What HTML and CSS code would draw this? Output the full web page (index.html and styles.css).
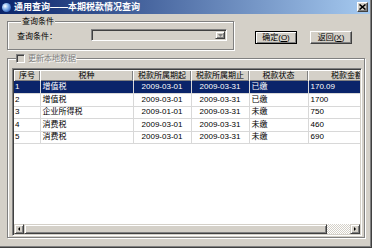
FILE: index.html
```html
<!DOCTYPE html>
<html lang="zh-CN">
  <head>
    <meta charset="UTF-8" />
    <title>通用查询——本期税款情况查询</title>
    <link rel="stylesheet" href="styles.css">
  </head>
  <body>
    <div class="window">
      <div class="frame">
        <div class="titlebar">
          <span class="app-icon"></span>
          <span class="title">通用查询——本期税款情况查询</span>
          <span class="close-btn">
            <svg width="7" height="6" viewBox="0 0 7 6"><path d="M0.5 0.5L6.5 5.5M6.5 0.5L0.5 5.5" stroke="#000" stroke-width="1.6"/></svg>
          </span>
        </div>

        <div class="content">
          <div class="top-row">
            <fieldset class="group query-group">
              <legend>查询条件</legend>
              <div class="field">
                <label>查询条件：</label>
                <div class="combo">
                  <span class="combo-btn">
                    <svg width="5" height="3" viewBox="0 0 5 3"><path d="M0 0h5L2.5 3z" fill="#808080"/></svg>
                  </span>
                </div>
              </div>
            </fieldset>
            <div class="actions">
              <button class="btn default">确定(<u>O</u>)</button>
              <button class="btn">返回(<u>X</u>)</button>
            </div>
          </div>

          <fieldset class="group data-group">
            <legend><span class="checkbox"></span><span class="muted">更新本地数据</span></legend>
            <div class="listview">
              <div class="list-body">
                <table class="grid">
                  <colgroup>
                    <col style="width:26px">
                    <col style="width:93px">
                    <col style="width:58px">
                    <col style="width:58px">
                    <col style="width:59px">
                    <col style="width:78px">
                  </colgroup>
                  <thead>
                    <tr>
                      <th>序号</th>
                      <th>税种</th>
                      <th>税款所属期起</th>
                      <th>税款所属期止</th>
                      <th>税款状态</th>
                      <th>税款金额</th>
                    </tr>
                  </thead>
                  <tbody>
                    <tr class="selected">
                      <td>1</td><td>增值税</td><td class="c">2009-03-01</td><td class="c">2009-03-31</td><td>已缴</td><td>170.09</td>
                    </tr>
                    <tr>
                      <td>2</td><td>增值税</td><td class="c">2009-03-01</td><td class="c">2009-03-31</td><td>已缴</td><td>1700</td>
                    </tr>
                    <tr>
                      <td>3</td><td>企业所得税</td><td class="c">2009-01-01</td><td class="c">2009-03-31</td><td>未缴</td><td>750</td>
                    </tr>
                    <tr>
                      <td>4</td><td>消费税</td><td class="c">2009-03-01</td><td class="c">2009-03-31</td><td>未缴</td><td>460</td>
                    </tr>
                    <tr>
                      <td>5</td><td>消费税</td><td class="c">2009-03-01</td><td class="c">2009-03-31</td><td>未缴</td><td>690</td>
                    </tr>
                  </tbody>
                </table>
              </div>
              <div class="hscroll">
                <span class="sb-btn">
                  <svg width="2" height="4" viewBox="0 0 2 4"><path d="M2 0v4L0 2z" fill="#000"/></svg>
                </span>
                <span class="sb-thumb"></span>
                <span class="sb-track"></span>
                <span class="sb-btn">
                  <svg width="2" height="4" viewBox="0 0 2 4"><path d="M0 0v4l2-2z" fill="#000"/></svg>
                </span>
              </div>
            </div>
          </fieldset>
        </div>
      </div>
    </div>
  </body>
</html>
```

FILE: styles.css
```css
* {
  box-sizing: border-box;
}
body {
  margin: 0;
  font-family: "Liberation Sans", "Noto Sans CJK SC", sans-serif;
  font-size: 8px;
  color: #000;
}
.window {
  width: 372px;
  height: 248px;
  background-color: #d4d0c8;
  border-right: 1px solid #404040;
  border-bottom: 1px solid #404040;
}
.frame {
  height: 100%;
  border-right: 1px solid #808080;
  border-bottom: 1px solid #808080;
}

/* title bar */
.titlebar {
  height: 14px;
  display: flex;
  align-items: center;
  padding: 0 2px;
  background: linear-gradient(to right, #0a246a, #a6caf0);
  color: #fff;
}
.app-icon {
  width: 9px;
  height: 9px;
  border-radius: 50%;
  background: radial-gradient(circle at 35% 35%, #fff, #8fbbee 35%, #2a5cb8 80%);
}
.title {
  margin-left: 3px;
  font-size: 9px;
  font-weight: bold;
  line-height: 10px;
}
.close-btn {
  margin-left: auto;
  width: 11px;
  height: 10px;
  display: flex;
  justify-content: center;
  align-items: center;
  background-color: #d4d0c8;
  border: 1px solid;
  border-color: #fff #404040 #404040 #fff;
  box-shadow: inset -1px -1px #808080;
}

/* body */
.content {
  padding: 3px 0 0 7px;
}
.top-row {
  display: flex;
  align-items: flex-start;
}
.group {
  margin: 0;
  padding: 0;
  min-width: 0;
  border: 1px solid #808080;
  box-shadow: 1px 1px 0 #fff, inset 1px 1px 0 #fff;
}
.group legend {
  margin-left: 4px;
  padding: 0 1px;
  height: 9px;
  line-height: 9px;
  background-color: #d4d0c8;
}
.query-group {
  width: 227px;
  padding: 3px 6px 8px 9px;
}
.field {
  display: flex;
  align-items: center;
  height: 12px;
}
.field label {
  width: 74px;
}
.combo {
  width: 136px;
  height: 12px;
  padding: 1px;
  display: flex;
  justify-content: flex-end;
  background-color: #d4d0c8;
  border: 1px solid;
  border-color: #808080 #fff #fff #808080;
  box-shadow: inset 1px 1px #404040, inset -1px -1px #d4d0c8;
}
.combo-btn {
  width: 10px;
  height: 8px;
  display: flex;
  justify-content: center;
  align-items: center;
  border: 1px solid;
  border-color: #d4d0c8 #404040 #404040 #d4d0c8;
  box-shadow: inset 1px 1px #fff, inset -1px -1px #808080;
}
.actions {
  display: flex;
  gap: 13px;
  margin: 14px 0 0 21px;
}
.btn {
  width: 42px;
  height: 13px;
  padding: 0;
  font: inherit;
  line-height: 10px;
  color: #000;
  background-color: #d4d0c8;
  border: 1px solid;
  border-color: #fff #404040 #404040 #fff;
  box-shadow: inset -1px -1px #808080;
}
.btn.default {
  border-color: #000;
  box-shadow: inset 1px 1px #fff, inset -1px -1px #808080;
}

/* data group */
.data-group {
  width: 358px;
  margin-top: 4px;
  padding: 5px 2px 1px 4px;
}
.data-group legend {
  display: flex;
  align-items: center;
  gap: 3px;
  padding: 0;
}
.checkbox {
  width: 9px;
  height: 9px;
  background-color: #d4d0c8;
  border: 1px solid;
  border-color: #808080 #fff #fff #808080;
  box-shadow: inset 1px 1px #404040, inset -1px -1px #d4d0c8;
}
.muted {
  color: #808080;
  text-shadow: 1px 1px 0 #fff;
}
.listview {
  height: 168px;
  padding: 1px;
  display: flex;
  flex-direction: column;
  background-color: #fff;
  border: 1px solid;
  border-color: #808080 #fff #fff #808080;
  box-shadow: inset 1px 1px #404040, inset -1px -1px #d4d0c8;
}
.list-body {
  flex: 1;
  overflow: hidden;
}
.grid {
  width: 372px;
  table-layout: fixed;
  border-collapse: collapse;
}
.grid th {
  height: 11px;
  padding: 0;
  font-weight: normal;
  line-height: 10px;
  white-space: nowrap;
  overflow: hidden;
  background-color: #d4d0c8;
  box-shadow: inset 1px 1px #fff, inset -1px -1px #808080;
}
.grid td {
  height: 12.5px;
  padding: 0 2px;
  line-height: 10px;
  white-space: nowrap;
  overflow: hidden;
  border-right: 1px solid #d8d8d8;
  border-bottom: 1px solid #d8d8d8;
}
.grid td:first-child {
  padding-left: 1px;
}
.grid td.c {
  text-align: center;
}
.grid tr.selected td {
  background-color: #0a246a;
  color: #fff;
}

/* horizontal scrollbar */
.hscroll {
  height: 10px;
  display: flex;
}
.sb-btn,
.sb-thumb {
  background-color: #d4d0c8;
  border: 1px solid;
  border-color: #d4d0c8 #404040 #404040 #d4d0c8;
  box-shadow: inset 1px 1px #fff, inset -1px -1px #808080;
}
.sb-btn {
  width: 10px;
  display: flex;
  justify-content: center;
  align-items: center;
}
.sb-thumb {
  width: 303px;
}
.sb-track {
  flex: 1;
  background: repeating-conic-gradient(#d4d0c8 0 25%, #fff 0 50%) 0 0 / 2px 2px;
}
```
